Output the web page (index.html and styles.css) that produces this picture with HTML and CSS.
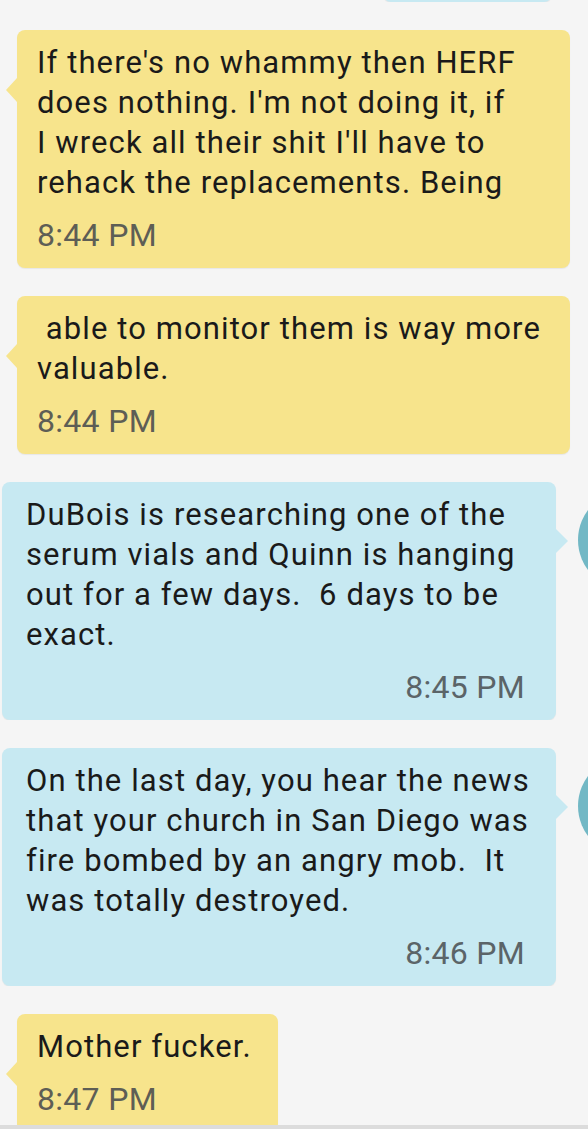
FILE: index.html
```html
<!DOCTYPE html>
<html lang="en">
<head>
    <meta charset="UTF-8">
    <meta name="viewport" content="width=device-width, initial-scale=1.0">
    <title>Messages</title>
    <link rel="stylesheet" href="styles.css">
</head>
<body>
<div class="thread">
    <!-- previous message, scrolled mostly out of view -->
    <div class="row out top">
        <div class="bubble"></div>
    </div>

    <div class="row in">
        <div class="bubble wide">
            <p class="text">If there's no whammy then HERF<br>does nothing. I'm not doing it, if<br>I wreck all their shit I'll have to<br>rehack the replacements. Being</p>
            <div class="time">8:44 PM</div>
        </div>
    </div>

    <div class="row in">
        <div class="bubble wide">
            <p class="text">&nbsp;able to monitor them is way more<br>valuable.</p>
            <div class="time">8:44 PM</div>
        </div>
    </div>

    <div class="row out">
        <div class="bubble">
            <p class="text">DuBois is researching one of the<br>serum vials and Quinn is hanging<br>out for a few days.&nbsp; 6 days to be<br>exact.</p>
            <div class="time">8:45 PM</div>
        </div>
        <div class="avatar"></div>
    </div>

    <div class="row out">
        <div class="bubble">
            <p class="text">On the last day, you hear the news<br>that your church in San Diego was<br>fire bombed by an angry mob.&nbsp; It<br>was totally destroyed.</p>
            <div class="time">8:46 PM</div>
        </div>
        <div class="avatar"></div>
    </div>

    <div class="row in">
        <div class="bubble">
            <p class="text">Mother fucker.</p>
            <div class="time">8:47 PM</div>
        </div>
    </div>
</div>

<div class="compose-edge"></div>
</body>
</html>
```

FILE: styles.css
```css
/* page */
body {
    margin: 0;
    background-color: #f5f5f5;
    font-family: Roboto, "Liberation Sans", sans-serif;
    overflow: hidden;
}
.thread {
    display: flex;
    flex-direction: column;
    gap: 28px;
}

/* message rows */
.row {
    display: flex;
    align-items: flex-start;
}
.row.in {
    padding-left: 17px;
}
.row.out {
    padding-left: 2px;
    gap: 22px;
    overflow: hidden; /* avatar is cut by the screen edge */
}
.row.top {
    padding-left: 383px;
    margin-top: -100px;
}

/* bubbles */
.bubble {
    position: relative;
    flex-shrink: 0;
    box-sizing: border-box;
    border-radius: 8px;
    padding: 13px 26px 13px 20px;
    box-shadow: 0 1px 1px rgba(0, 0, 0, 0.06);
}
.bubble.wide {
    width: 553px;
}
.row.in .bubble {
    background-color: #f7e48c;
}
.row.in .bubble::before {
    content: "";
    position: absolute;
    left: -11px;
    top: 48px;
    border-top: 12px solid transparent;
    border-bottom: 12px solid transparent;
    border-right: 11px solid #f7e48c;
}
.row.out .bubble {
    background-color: #c7e9f2;
    width: 554px;
    padding-left: 24px;
    padding-right: 31px;
}
.row.out .bubble::after {
    content: "";
    position: absolute;
    right: -12px;
    top: 47px;
    border-top: 12px solid transparent;
    border-bottom: 12px solid transparent;
    border-left: 12px solid #c7e9f2;
}
.row.top .bubble {
    width: 169px;
    height: 102px;
}
.row.top .bubble::after {
    display: none;
}

.text {
    margin: 0;
    font-size: 31px;
    line-height: 40px;
    letter-spacing: 1.1px;
    color: #1a1a1a;
    white-space: nowrap;
}
.time {
    margin-top: 12px;
    font-size: 32px;
    line-height: 40px;
    letter-spacing: 0.3px;
    color: #5e5e55;
}
.row.out .time {
    text-align: right;
    color: #5b6468;
}

/* contact avatar */
.avatar {
    flex-shrink: 0;
    width: 100px;
    height: 100px;
    margin-top: 8px;
    border-radius: 50%;
    background-color: #72b8c5;
}

/* top edge of the compose bar */
.compose-edge {
    position: fixed;
    left: 0;
    right: 0;
    bottom: 0;
    height: 4px;
    background-color: #dcdcdc;
}
```
